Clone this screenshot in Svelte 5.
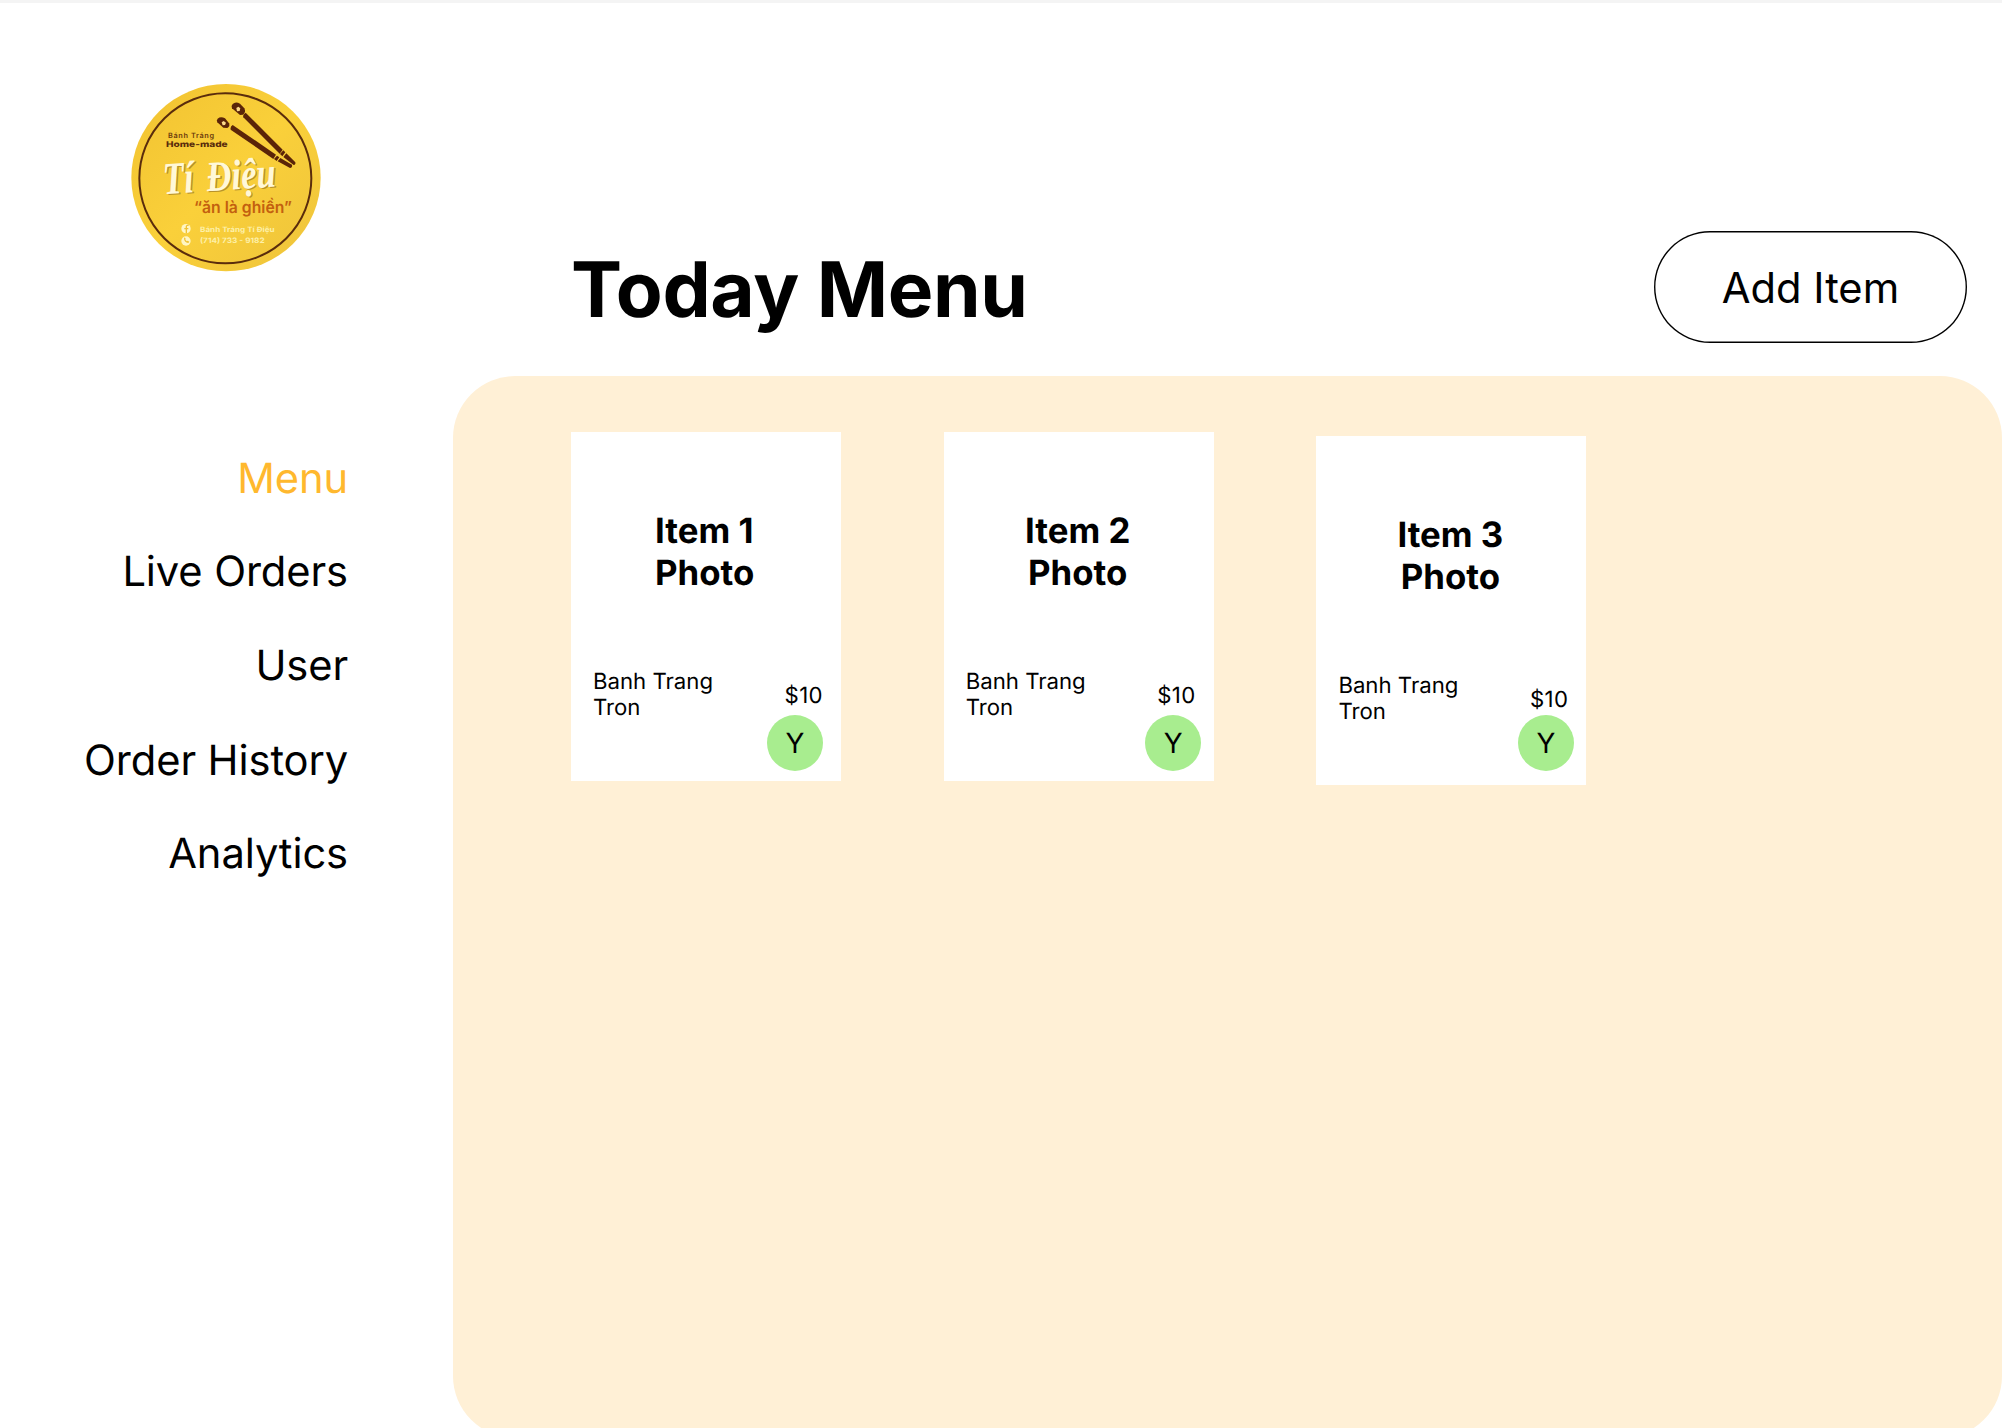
<script>
  const nav = ['Menu', 'Live Orders', 'User', 'Order History', 'Analytics'];
  const items = [
    { title: 'Item 1', name: 'Banh Trang Tron', price: '$10', kind: 'first' },
    { title: 'Item 2', name: 'Banh Trang Tron', price: '$10', kind: 'second' },
    { title: 'Item 3', name: 'Banh Trang Tron', price: '$10', kind: 'third' }
  ];
</script>

<div class="page">
  <aside>
    <svg class="logo" viewBox="0 0 630 615" role="img" aria-label="Bánh Tráng Tí Điệu">
      <defs>
        <linearGradient id="gold" x1="0" y1="0" x2="1" y2="1">
          <stop offset="0" stop-color="#f1c231" />
          <stop offset="0.5" stop-color="#fad03a" />
          <stop offset="1" stop-color="#eec33b" />
        </linearGradient>
      </defs>
      <ellipse cx="318" cy="308" rx="284" ry="281" fill="url(#gold)" />
      <ellipse cx="316" cy="310" rx="258" ry="255" fill="none" stroke="#5a2c0c" stroke-width="6" />
      <!-- chopsticks -->
      <g fill="#5a2408">
        <path d="M338 87q9-9 22-1l13 14q6 12-4 19l-9 1-24-20q-4-7 2-13z" />
        <path d="M377 113 488 224l-9 12-109-109q-3-9 7-14z" />
        <path d="m490 226 6 6-9 12-7-7zM499 235l27 27q2 7-5 8l-31-24z" />
        <path d="M293 131q9-8 22-1l12 15q4 9-5 14l-12-1-18-16q-4-6 1-11z" />
        <path d="m338 150 130 89-8 13-128-88q-2-9 6-14z" />
        <path d="m471 242 7 5-8 11-8-6zM481 249l35 20q2 8-6 10l-37-20z" />
      </g>
      <g fill="#fbd98a">
        <path d="m349 99 6-4 6 5-2 8-8 1z" />
        <path d="m305 142 6-4 7 5-3 7-7 1z" />
      </g>
      <g class="brand">
        <text x="144" y="188" font-size="22" textLength="138" font-weight="600" fill="#6a3a0c">Bánh Tráng</text>
        <text x="138" y="215" font-size="24" textLength="185" lengthAdjust="spacingAndGlyphs" font-weight="800" fill="#5a2c0c">Home-made</text>
        <g class="script" transform="rotate(-4 130 355)">
          <text x="136" y="361" font-size="136" textLength="92" lengthAdjust="spacingAndGlyphs" fill="#b8922b">Tí</text>
          <text x="266" y="361" font-size="128" textLength="208" lengthAdjust="spacingAndGlyphs" fill="#b8922b">Điệu</text>
          <text x="132" y="358" font-size="136" textLength="92" lengthAdjust="spacingAndGlyphs" fill="#fff8d8">Tí</text>
          <text x="262" y="358" font-size="128" textLength="208" lengthAdjust="spacingAndGlyphs" fill="#fff8d8">Điệu</text>
        </g>
        <text x="222" y="414" font-size="50" textLength="294" lengthAdjust="spacingAndGlyphs" font-weight="600" fill="#c3600f">“ăn là ghiền”</text>
        <text x="240" y="470" font-size="22" textLength="224" lengthAdjust="spacingAndGlyphs" font-weight="700" fill="#fdf0a8">Bánh Tráng Tí Điệu</text>
        <text x="240" y="505" font-size="22" textLength="194" lengthAdjust="spacingAndGlyphs" font-weight="700" fill="#fdf0a8">(714) 733 - 9182</text>
      </g>
      <circle cx="198" cy="461" r="14" fill="#fff6c4" />
      <path d="M199 475v-20q0-5 7-4M193 461h12" fill="none" stroke="#efc134" stroke-width="4" />
      <circle cx="198" cy="498" r="14" fill="#fff6c4" />
      <path d="M192 490q0 12 13 14l3-4-5-3-3 2-4-5 1-3-3-4z" fill="#efc134" />
    </svg>
    <nav>
      {#each nav as label, i}
        <a class:active={i === 0}>{label}</a>
      {/each}
    </nav>
  </aside>

  <main>
    <header>
      <h1>Today Menu</h1>
      <button>Add Item</button>
    </header>
    <section>
      {#each items as item}
        <article class={item.kind}>
          <h2>{item.title}<br />Photo</h2>
          <div class="info">
            <p>{item.name}</p>
            <span>{item.price}</span>
          </div>
          <div class="badge">Y</div>
        </article>
      {/each}
    </section>
  </main>
</div>

<style>
  :global(body) {
    margin: 0;
    background: #fff;
    overflow: hidden;
  }
  .page {
    box-sizing: border-box;
    display: flex;
    width: 2002px;
    height: 1428px;
    overflow: hidden;
    border-top: 3px solid #f4f4f4;
    font-family: Inter, 'Liberation Sans', sans-serif;
    font-optical-sizing: none;
    text-rendering: geometricPrecision;
    color: #000;
  }
  aside {
    width: 453px;
    flex: none;
  }
  .logo {
    display: block;
    width: 210px;
    height: 205px;
    margin: 72px 0 0 120px;
  }
  .brand {
    font-family: Inter, sans-serif;
  }
  .script {
    font-family: 'Liberation Serif', serif;
    font-style: italic;
    font-weight: 700;
  }
  nav {
    display: grid;
    grid-template-rows: 93px 94px 95px 93px 50px;
    justify-items: end;
    margin-top: 174px;
    padding-right: 105px;
  }
  nav a {
    font-size: 41.7px;
    line-height: 50px;
    letter-spacing: -0.1px;
  }
  nav .active {
    color: #ffb82e;
  }
  main {
    flex: 1;
    display: flex;
    flex-direction: column;
  }
  header {
    display: flex;
    flex: none;
    height: 373px;
    box-sizing: border-box;
    justify-content: space-between;
    align-items: flex-start;
    padding: 228px 35px 0 118px;
  }
  h1 {
    margin: 12px 0 0;
    font-size: 76.6px;
    line-height: 94px;
    font-weight: 700;
    letter-spacing: -0.35px;
  }
  button {
    box-sizing: border-box;
    width: 313px;
    height: 112px;
    border: 0;
    box-shadow: inset 0 0 0 1.4px #000;
    border-radius: 56px;
    background: #fff;
    padding: 1px 0 0;
    font: inherit;
    font-size: 41.7px;
    color: #000;
  }
  section {
    box-sizing: border-box;
    flex: none;
    height: 1062px;
    border-radius: 62px;
    background: #fff0d6;
    display: flex;
    align-items: flex-start;
    gap: 102.7px;
    padding: 56px 0 0 118px;
  }
  article {
    display: flex;
    flex-direction: column;
    box-sizing: border-box;
    width: 270px;
    height: 349px;
    padding-top: 79px;
    background: #fff;
  }
  h2 {
    margin: 0;
    padding-right: 2px;
    font-size: 34.8px;
    line-height: 41.8px;
    font-weight: 700;
    text-align: center;
  }
  .first h2 {
    text-align: left;
    padding-left: 84px;
  }
  .info {
    display: flex;
    justify-content: space-between;
    padding: 74px 18px 0 22px;
    height: 46.5px;
    font-size: 22.2px;
    line-height: 26.8px;
  }
  .info p {
    margin: 0;
    width: 130px;
  }
  .info span {
    margin-top: 14px;
    letter-spacing: 0.4px;
  }
  .badge {
    width: 56px;
    height: 56px;
    border-radius: 50%;
    background: #a8ed8f;
    align-self: flex-end;
    margin-right: 12.5px;
    font-size: 27.8px;
    line-height: 56px;
    text-align: center;
  }
  .first .badge {
    margin-right: 18px;
  }
  .third {
    margin-top: 4px;
  }
  .third .info {
    height: 42.5px;
  }
</style>
